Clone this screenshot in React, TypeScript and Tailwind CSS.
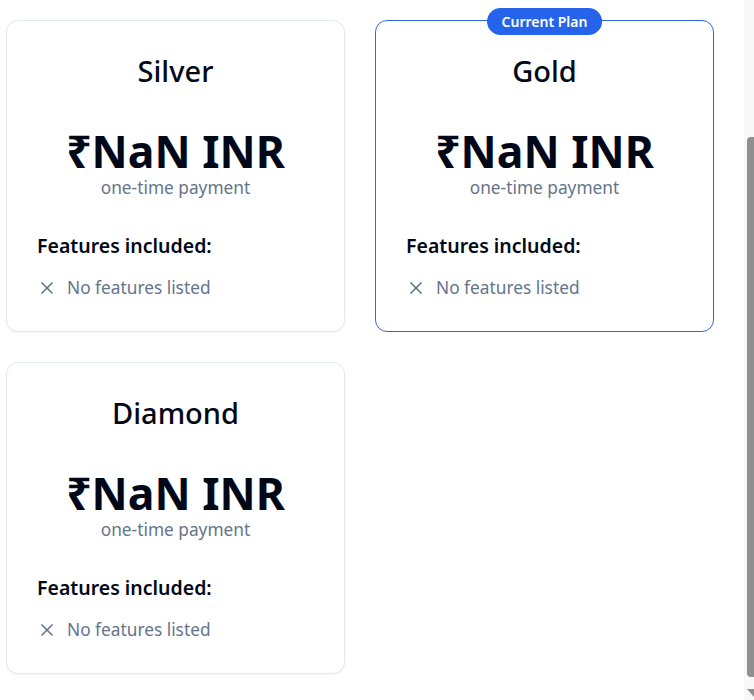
import React from "react";
import { X } from "lucide-react";

type Plan = { name: string; current?: boolean };

const plans: Plan[] = [
  { name: "Silver" },
  { name: "Gold", current: true },
  { name: "Diamond" },
];

function PlanCard({ plan }: { plan: Plan }) {
  return (
    <div
      className={
        plan.current
          ? "relative rounded-xl border border-[#2f66e6] bg-white px-[30px] pt-[32px] pb-[29px]"
          : "relative rounded-xl border border-[#e2e8f0] bg-white px-[30px] pt-[32px] pb-[29px] shadow-[0_1px_2px_rgba(0,0,0,0.05)]"
      }
    >
      {plan.current && (
        <div className="absolute -top-[13px] left-1/2 flex h-[27px] -translate-x-1/2 items-center whitespace-nowrap rounded-full bg-[#2563eb] px-[15px] text-[14px] font-semibold leading-5 text-white">
          Current Plan
        </div>
      )}
      <h3 className="text-center text-[29px] font-medium leading-[36px] text-[#020817]">
        {plan.name}
      </h3>
      <div className="mt-[39px] text-center">
        <div className="text-[44.5px] font-bold leading-[46px] text-[#020817]">₹NaN INR</div>
        <div className="text-[17.3px] leading-[28px] text-[#64748b]">one-time payment</div>
      </div>
      <div className="mt-[30px]">
        <h4 className="text-[19.5px] font-semibold leading-[28px] text-[#020817]">Features included:</h4>
        <ul className="mt-[14px]">
          <li className="flex items-center gap-[10px] text-[17.3px] leading-[28px] text-[#64748b]">
            <X size={20} className="shrink-0 text-[#64748b]" />
            <span>No features listed</span>
          </li>
        </ul>
      </div>
    </div>
  );
}

export default function App() {
  return (
    <div
      className="relative h-[700px] w-full overflow-hidden bg-white"
      style={{ fontFamily: '"Noto Sans", "Open Sans", sans-serif' }}
    >
      <div className="grid grid-cols-[339px_339px] items-start gap-[30px] pl-[6px] pt-[20px]">
        {plans.map((p) => (
          <PlanCard key={p.name} plan={p} />
        ))}
      </div>
      <div className="absolute right-0 top-0 h-[700px] w-[10px] bg-[#f8f8f8]">
        <div className="absolute left-[3px] top-[137px] h-[540px] w-[7px] rounded-l-[4px] bg-[#8f8f8f]" />
        <svg className="absolute left-[3px] top-[689px]" width="7" height="11" viewBox="0 0 7 11">
          <polygon points="0,0 7,0 7,8" fill="#8f8f8f" />
        </svg>
      </div>
    </div>
  );
}
